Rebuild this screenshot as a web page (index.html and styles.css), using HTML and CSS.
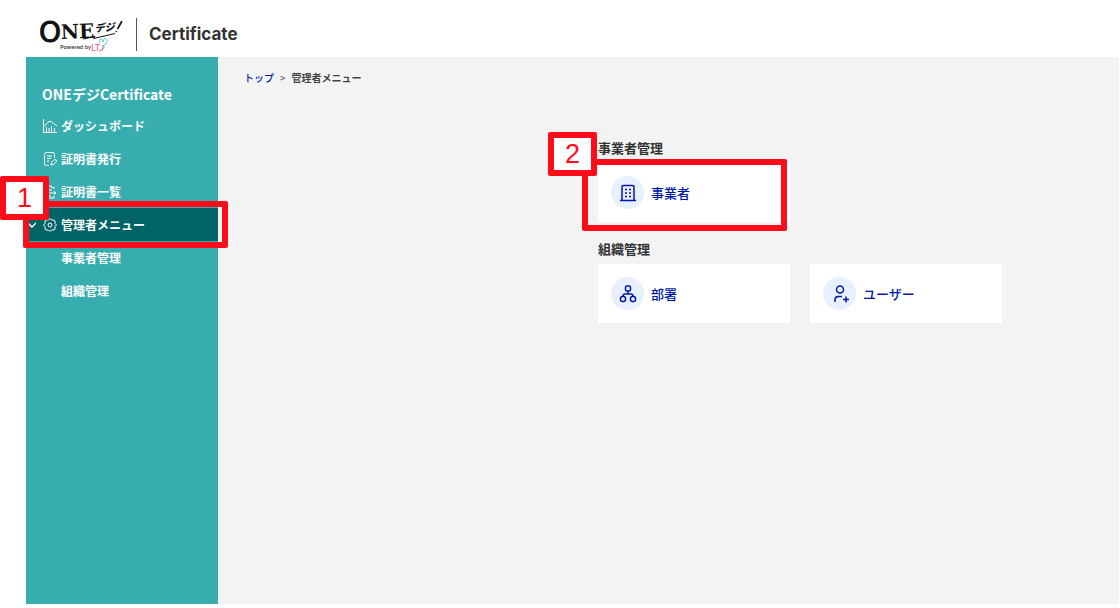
FILE: index.html
```html
<!DOCTYPE html>
<html lang="ja">
<head>
  <meta charset="UTF-8">
  <meta name="viewport" content="width=device-width, initial-scale=1.0">
  <title>管理者メニュー</title>
  <link rel="stylesheet" href="styles.css">
</head>
<body>
  <header class="header">
    <svg class="logo" viewBox="0 0 84 36" role="img" aria-label="ONEデジ">
      <text class="logo-o" x="-1" y="25">O</text>
      <text class="logo-ne" x="21" y="22" transform="rotate(-2 21 22)">NE</text>
      <text class="logo-deji" x="55" y="15" transform="rotate(-5 55 15)">デジ</text>
      <path d="M82 4L77.500 12M76.500 14L76 15" stroke="#111" stroke-width="1.600"/>
      <path d="M43 22L55 19.500L53.500 21.500L75 16.500" stroke="#111"/>
      <text class="logo-powered" x="20" y="32">Powered by</text>
      <text class="logo-lt" x="51" y="34">LT</text>
      <path d="M60 26C58 21 63 21 63 25C63 20 68 21 67 25C66 28 63 29 62 29C66 29 64 33 61 33" stroke="#55bfd2"/>
      <path d="M59 34C61 34 63 32 63 30" stroke="#f0548a"/>
    </svg>
    <span class="product">Certificate</span>
  </header>

  <div class="layout">
    <nav class="sidebar">
      <h1>ONEデジCertificate</h1>
      <ul class="menu">
        <li><a href="#">
          <svg class="icon" viewBox="0 0 14 14"><path d="M.5 0V13.500H14M1 7L6 2.500H8L14 7M3.500 8V13M6 9V13M8.500 7V13M11.500 9V13"/></svg>
          ダッシュボード</a></li>
        <li><a href="#">
          <svg class="icon" viewBox="0 0 14 14"><path d="M11.500 6V2.500A2 2 0 0 0 9.500.5H3.500A2 2 0 0 0 1.500 2.500V11.500A2 2 0 0 0 3.500 13.500H6M4 4H9M4 6.500H8M4 9H6M8 13L8.500 10.500L11.500 7.500Q13.500 7.500 13.500 9.500L10.500 12.500Z"/></svg>
          証明書発行</a></li>
        <li><a href="#">
          <svg class="icon" viewBox="0 0 14 14"><path d="M11 4V2.500H8.500V1H5.500V2.500H2.500V13H11V11M5 5H9M5 8H13M11 6L13 8L11 10M5 11H8"/></svg>
          証明書一覧</a></li>
        <li class="active"><a href="#">
          <svg class="chevron" viewBox="0 0 8 6"><path d="M0 1L4 5L8 1"/></svg>
          <svg class="icon" viewBox="0 0 14 14"><path d="M5.500 2L7 .5L8.500 2H11L12 3V5.500L13.500 7L12 8.500V11L11 12H8.500L7 13.500L5.500 12H3L2 11V8.500L.5 7L2 5.500V3L3 2Z"/><circle cx="7" cy="7" r="2"/></svg>
          管理者メニュー</a>
          <span class="highlight"></span>
          <span class="step">1</span>
        </li>
        <li><a href="#" class="sub">事業者管理</a></li>
        <li><a href="#" class="sub">組織管理</a></li>
      </ul>
    </nav>

    <main class="main">
      <div class="breadcrumb"><a href="#">トップ</a><span>&gt;</span><b>管理者メニュー</b></div>
      <div class="sections">
        <section>
          <h2>事業者管理</h2>
          <div class="cards">
            <div class="card-wrap">
              <a class="card" href="#">
                <span class="circle"><svg viewBox="0 0 18 18"><path d="M1 16.500H17M3 16V3Q3 1.500 4.500 1.500H13.500Q15 1.500 15 3V16"/><path d="M6 5.500H8M10 5.500H12M6 9H8M10 9H12M6 12.500H8M10 12.500H12"/></svg></span>
                事業者</a>
              <span class="highlight"></span>
              <span class="step">2</span>
            </div>
          </div>
        </section>
        <section>
          <h2>組織管理</h2>
          <div class="cards">
            <a class="card" href="#">
              <span class="circle"><svg viewBox="0 0 18 18"><rect x="6.500" y="1" width="5" height="5" rx="1.500"/><rect x="1.500" y="11.500" width="5" height="5" rx="2"/><rect x="11.500" y="11.500" width="5" height="5" rx="2"/><path d="M9 6V9M4 11.500Q4 9 6 9H12Q14 9 14 11.500"/></svg></span>
              部署</a>
            <a class="card" href="#">
              <span class="circle"><svg viewBox="0 0 18 18"><circle cx="9" cy="4.500" r="3.500"/><path d="M4 17V15Q4 11.500 7.500 11.500H11M15 11.500V17.500M12 14.500H18"/></svg></span>
              ユーザー</a>
          </div>
        </section>
      </div>
    </main>
  </div>
</body>
</html>
```
FILE: styles.css
```css
* {
  box-sizing: border-box;
}
body {
  margin: 0;
  padding: 0 1px 4px 26px;
  min-height: 100vh;
  display: flex;
  flex-direction: column;
  background: #fff;
  font-family: "Noto Sans CJK JP", sans-serif;
  font-size: 12px;
}
a {
  text-decoration: none;
}
svg {
  fill: none;
  flex: none;
}
.header {
  display: flex;
  align-items: center;
  height: 57px;
  padding: 12px 14px 0;
}
.logo {
  width: 84px;
  height: 36px;
}
.logo text {
  fill: #111;
}
.logo .logo-o {
  font: 28px "DejaVu Sans", sans-serif;
  stroke: #111;
}
.logo .logo-ne {
  font: bold 20px "DejaVu Serif", serif;
}
.logo .logo-deji {
  font: italic 900 10px "Noto Sans CJK JP", sans-serif;
}
.logo .logo-powered {
  font: 6px Lato, sans-serif;
}
.logo .logo-lt {
  font: 9px Lato, sans-serif;
  fill: #f0548a;
}
.product {
  margin-left: 12px;
  padding-left: 12px;
  border-left: 1px solid #555;
  font: 700 17px/33px Inter, sans-serif;
  color: #333;
}
.layout {
  display: flex;
  flex: 1;
}
.sidebar {
  width: 192px;
  background: #37adb0;
  color: #fff;
}
.sidebar h1 {
  margin: 0;
  padding: 27px 16px 5px;
  font-size: 14px;
  line-height: 20px;
}
.menu {
  margin: 0;
  padding: 0;
  list-style: none;
}
.menu li {
  position: relative;
}
.menu a {
  display: flex;
  align-items: center;
  gap: 4px;
  height: 33px;
  padding-left: 17px;
  color: #fff;
  font-weight: bold;
}
.menu .sub {
  padding-left: 35px;
}
.menu .active {
  background: #006466;
}
.menu .active a {
  padding-left: 2px;
}
.icon {
  width: 14px;
  height: 14px;
  stroke: #fff;
}
.chevron {
  width: 8px;
  height: 6px;
  margin-right: 3px;
  stroke: #fff;
  stroke-width: 1.5;
}
.main {
  flex: 1;
  background: #f3f3f3;
}
.breadcrumb {
  display: flex;
  gap: 6px;
  padding: 13px 26px;
  font-size: 10px;
  line-height: 16px;
  color: #444;
}
.breadcrumb a {
  color: #0017a8;
  font-weight: 500;
}
.sections {
  display: flex;
  flex-direction: column;
  gap: 16px;
  padding: 38px 16px 16px 380px;
}
.sections h2 {
  margin: 0;
  padding-bottom: 4px;
  font-size: 13px;
  line-height: 22px;
  color: #333;
}
.cards {
  display: flex;
  gap: 20px;
}
.card-wrap {
  position: relative;
}
.card {
  display: flex;
  align-items: center;
  gap: 7px;
  width: 192px;
  height: 59px;
  padding-left: 13px;
  background: #fff;
  color: #0017a8;
  font-size: 13px;
  font-weight: 500;
}
.circle {
  display: flex;
  align-items: center;
  justify-content: center;
  width: 33px;
  height: 33px;
  border-radius: 50%;
  background: #e8f0ff;
}
.circle svg {
  width: 18px;
  height: 18px;
  stroke: #0017a8;
  stroke-width: 1.5;
}
/* numbered steps */
.highlight {
  position: absolute;
  inset: -7px -10px -7px -3px;
  border: 6px solid #ff0c1b;
  border-radius: 2px;
}
.card-wrap .highlight {
  inset: -4px 3px -9px -16px;
}
.step {
  position: absolute;
  top: -32px;
  left: -26px;
  width: 49px;
  height: 44px;
  border: 6px solid #ff0c1b;
  border-radius: 2px;
  background: #fff;
  color: #ff0c1b;
  font: 27px/32px "Liberation Sans", sans-serif;
  text-align: center;
}
.card-wrap .step {
  top: -31px;
  left: -50px;
}
```
